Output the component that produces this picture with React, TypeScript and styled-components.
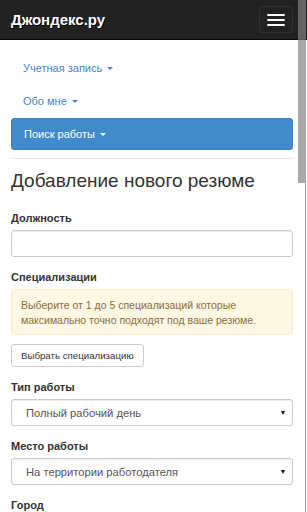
import React from "react";
import styled, { createGlobalStyle } from "styled-components";

const Global = createGlobalStyle`
  html, body { margin: 0; padding: 0; background: #fff; overflow: hidden; }
  body { font-family: "Liberation Sans", Arial, sans-serif; color: #333; width: 307px; height: 512px; }
  * { box-sizing: border-box; }
`;

const Page = styled.div`
  position: relative;
  width: 307px;
  height: 512px;
  overflow: hidden;
`;

const Navbar = styled.header`
  height: 40px;
  background: #222;
  border-bottom: 1px solid #080808;
  display: flex;
  align-items: center;
  justify-content: space-between;
  padding: 0 14px 0 11px;
`;

const Brand = styled.a`
  color: #fff;
  font-weight: bold;
  font-size: 15px;
  text-decoration: none;
  text-shadow: 1px 1px 0 #000;
`;

const Toggle = styled.button`
  width: 34px;
  height: 27px;
  border: 1px solid #333;
  border-radius: 4px;
  background: transparent;
  padding: 7px 7px 6px;
  display: flex;
  flex-direction: column;
  gap: 3px;
`;

const Bar = styled.span`
  display: block;
  width: 18px;
  height: 2px;
  background: #fff;
  border-radius: 1px;
`;

const Content = styled.main`
  padding: 11px 14px 0 11px;
`;

const Nav = styled.nav`
  display: flex;
  flex-direction: column;
`;

const NavLink = styled.a<{ $active?: boolean }>`
  display: flex;
  align-items: center;
  gap: 5px;
  height: ${(p) => (p.$active ? "32px" : "33px")};
  margin-top: ${(p) => (p.$active ? "1px" : "0")};
  padding-left: 12px;
  font-size: 11px;
  text-decoration: none;
  color: ${(p) => (p.$active ? "#fff" : "#4a84c2")};
  background: ${(p) => (p.$active ? "#428bca" : "transparent")};
  border: ${(p) => (p.$active ? "1px solid #3b84c4" : "none")};
  border-radius: 3px;
`;

const Caret = styled.span`
  display: inline-block;
  width: 0;
  height: 0;
  border-top: 3px solid currentColor;
  border-left: 3px solid transparent;
  border-right: 3px solid transparent;
  margin-top: 1px;
`;

const Divider = styled.hr`
  margin: 8px 0 0;
  border: 0;
  border-top: 1px solid #e5e5e5;
`;

const Title = styled.h2`
  margin: 11px 0 18px;
  font-size: 19px;
  font-weight: normal;
  line-height: 22px;
  color: #333;
`;

const Group = styled.div`
  margin-bottom: 12px;
`;

const Label = styled.label`
  display: block;
  font-size: 11px;
  font-weight: bold;
  line-height: 17px;
  margin-bottom: 3px;
  color: #333;
`;

const TextInput = styled.input`
  display: block;
  width: 100%;
  height: 27px;
  border: 1px solid #ccc;
  border-radius: 3px;
  box-shadow: inset 0 1px 1px rgba(0, 0, 0, 0.075);
  padding: 4px 10px;
  font: inherit;
  font-size: 11px;
`;

const Alert = styled.div`
  background: #fcf8e3;
  border: 1px solid #faebcc;
  border-radius: 3px;
  color: #8a6d3b;
  font-size: 10.5px;
  line-height: 15px;
  padding: 8px 9px 6px;
  margin-bottom: 9px;
`;

const SmallButton = styled.button`
  height: 23px;
  padding: 0 9px;
  background: #fff;
  border: 1px solid #ccc;
  border-radius: 3px;
  font-family: "Liberation Sans", Arial, sans-serif;
  font-size: 9.7px;
  color: #333;
`;

const SelectWrap = styled.div`
  position: relative;
`;

const Select = styled.select`
  display: block;
  width: 100%;
  height: 27px;
  border: 1px solid #ccc;
  border-radius: 3px;
  background: #fff;
  box-shadow: inset 0 1px 1px rgba(0, 0, 0, 0.075);
  appearance: none;
  -webkit-appearance: none;
  padding: 0 20px 0 14px;
  font-family: "Liberation Sans", Arial, sans-serif;
  font-size: 11.2px;
  color: #555;
`;

const Arrow = styled.span`
  position: absolute;
  right: 8px;
  top: 12px;
  width: 0;
  height: 0;
  border-top: 4px solid #111;
  border-left: 2.5px solid transparent;
  border-right: 2.5px solid transparent;
  pointer-events: none;
`;

const Thumb = styled.div`
  position: absolute;
  top: 0;
  right: 1px;
  width: 8px;
  height: 183px;
  background: rgba(129, 129, 129, 0.69);
`;

const TrackLine = styled.div`
  position: absolute;
  top: 183px;
  right: 1px;
  width: 1px;
  bottom: 0;
  background: #9a9a9a;
`;

const Dropdown = ({ value }: { value: string }) => (
  <SelectWrap>
    <Select defaultValue={value}>
      <option>{value}</option>
    </Select>
    <Arrow />
  </SelectWrap>
);

export default function App() {
  return (
    <Page>
      <Global />
      <Navbar>
        <Brand href="#">Джондекс.ру</Brand>
        <Toggle aria-label="menu">
          <Bar />
          <Bar />
          <Bar />
        </Toggle>
      </Navbar>
      <Content>
        <Nav>
          <NavLink href="#">
            Учетная запись <Caret />
          </NavLink>
          <NavLink href="#">
            Обо мне <Caret />
          </NavLink>
          <NavLink href="#" $active>
            Поиск работы <Caret />
          </NavLink>
        </Nav>
        <Divider />
        <Title>Добавление нового резюме</Title>
        <Group>
          <Label>Должность</Label>
          <TextInput type="text" />
        </Group>
        <Group>
          <Label>Специализации</Label>
          <Alert>
            Выберите от 1 до 5 специализаций которые максимально точно подходят под ваше резюме.
          </Alert>
          <SmallButton>Выбрать специализацию</SmallButton>
        </Group>
        <Group>
          <Label>Тип работы</Label>
          <Dropdown value="Полный рабочий день" />
        </Group>
        <Group>
          <Label>Место работы</Label>
          <Dropdown value="На территории работодателя" />
        </Group>
        <Group>
          <Label>Город</Label>
        </Group>
      </Content>
      <Thumb />
      <TrackLine />
    </Page>
  );
}
